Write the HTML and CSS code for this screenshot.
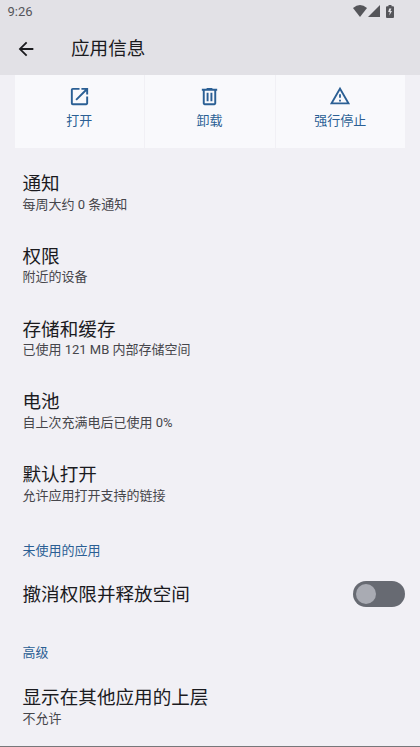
FILE: index.html
```html
<!DOCTYPE html>
<html lang="zh-CN">
<head>
<meta charset="utf-8">
<title>应用信息</title>
<link rel="stylesheet" href="styles.css">
</head>
<body>
<div class="screen">
  <header class="top">
    <div class="status">
      <span class="clock">9:26</span>
      <div class="status-icons">
        <svg width="14" height="12" viewBox="0 0 14 12"><path d="M7 12 0 3Q7-3 14 3Z"/></svg>
        <svg width="12" height="12" viewBox="0 0 12 12"><path d="M12 0V12H0Z"/></svg>
        <svg class="battery" width="8" height="13" viewBox="0 0 8 13"><path fill-rule="evenodd" d="M2.500 0h3v1.300H7q1 0 1 1V12q0 1-1 1H1q-1 0-1-1V2.300q0-1 1-1h1.500ZM3.200 3.500 2.200 7h1.600L3.300 10.500 6 6H4.400L5.400 3.500Z"/></svg>
      </div>
    </div>
    <div class="appbar">
      <svg class="back" width="24" height="24" viewBox="0 0 24 24"><path d="M20 11H7.830l5.590-5.590L12 4l-8 8 8 8 1.410-1.410L7.830 13H20Z"/></svg>
      <h1>应用信息</h1>
    </div>
  </header>
  <nav class="actions">
    <div class="action"><svg width="24" height="24" viewBox="0 0 24 24"><path d="M19 19H5V5h7V3H5a2 2 0 0 0-2 2v14a2 2 0 0 0 2 2h14c1.100 0 2-.9 2-2v-7h-2v7ZM14 3v2h3.590l-9.830 9.830 1.410 1.410L19 6.410V10h2V3h-7Z"/></svg><span>打开</span></div>
    <div class="action"><svg width="24" height="24" viewBox="0 0 24 24"><path fill-rule="evenodd" d="M15 4V3H9v1H4v2h1v13c0 1.100.9 2 2 2h10c1.100 0 2-.9 2-2V6h1V4h-5Zm2 15H7V6h10v13ZM9 8h2v9H9Zm4 0h2v9h-2Z"/></svg><span>卸载</span></div>
    <div class="action"><svg class="warning" width="24" height="24" viewBox="0 0 24 24"><path fill-rule="evenodd" d="M12 5.990 19.530 19H4.470L12 5.990M12 2 1 21h22L12 2Zm1 14h-2v2h2v-2Zm0-6h-2v4h2v-4Z"/></svg><span>强行停止</span></div>
  </nav>
  <main class="list">
    <div class="item"><h2>通知</h2><p>每周大约 0 条通知</p></div>
    <div class="item"><h2>权限</h2><p>附近的设备</p></div>
    <div class="item"><h2>存储和缓存</h2><p>已使用 121 MB 内部存储空间</p></div>
    <div class="item"><h2>电池</h2><p>自上次充满电后已使用 0%</p></div>
    <div class="item"><h2>默认打开</h2><p>允许应用打开支持的链接</p></div>
    <h3>未使用的应用</h3>
    <div class="item toggle-row"><h2>撤消权限并释放空间</h2><div class="switch"><i></i></div></div>
    <h3 class="advanced">高级</h3>
    <div class="item"><h2>显示在其他应用的上层</h2><p>不允许</p></div>
  </main>
</div>
</body>
</html>
```
FILE: styles.css
```css
* { box-sizing: border-box; margin: 0; }
body { background: #f1f0f5; color: #1b1b1f; font-family: Roboto, "Noto Sans CJK SC", sans-serif; }
.screen { height: 747px; overflow: hidden; border-bottom: 1px solid #77777a; }
.top { height: 75px; background: #e2e1e6; }
.status { height: 22px; display: flex; justify-content: space-between; align-items: center; padding: 0 26px 0 7.500px; }
.clock { font-size: 13px; line-height: 22px; color: #55555a; padding-top: 1px; }
.status-icons { display: flex; align-items: center; gap: 2px; fill: #55555a; }
.status-icons svg:first-child { margin-right: -1px; }
.battery { margin-left: 4px; }
.appbar { height: 53px; display: flex; align-items: center; padding-left: 15px; }
.back { width: 22px; height: 22px; fill: #1b1b1f; }
h1 { margin-left: 34px; font-size: 18.600px; font-weight: 400; line-height: 28px; }
.actions { display: grid; grid-template-columns: repeat(3, 1fr); gap: 1px; height: 72.500px; margin: 0 15px; }
.action { background: #f9f9fc; color: #2b5f94; display: flex; flex-direction: column; align-items: center; padding-top: 10px; padding-right: 1px; font-size: 13px; line-height: 20px; }
.action:last-child { padding-right: 0; }
.action svg { width: 23px; height: 23px; fill: currentColor; margin-bottom: 2.500px; }
.action .warning { width: 22px; height: 22px; margin-bottom: 3.500px; }
.list { padding: 23.500px 15px 0 22.500px; }
.item { height: 72.800px; }
h2 { font-size: 18.600px; font-weight: 400; line-height: 26px; }
p { font-size: 13px; line-height: 18px; color: #46464b; margin-top: -1.400px; }
h3 { font-size: 13px; font-weight: 400; line-height: 20px; color: #2b5f94; margin-top: 6px; }
.toggle-row { height: 26px; margin-top: 20px; display: flex; align-items: center; justify-content: space-between; }
.toggle-row h2 { padding-top: 3px; }
.switch { width: 52px; height: 26px; border-radius: 13px; background: #676a72; padding: 3px; }
.switch i { display: block; width: 20px; height: 20px; border-radius: 50%; background: #a9abb3; }
.advanced { margin: 36px 0 22.500px; }
```
